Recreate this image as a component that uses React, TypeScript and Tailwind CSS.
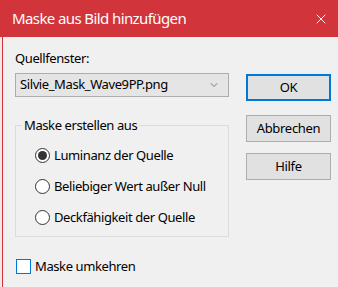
import { ChevronDown, X } from "lucide-react";

const font = { fontFamily: '"Noto Sans", "Open Sans", sans-serif' };

const Radio = ({ label, checked }: { label: string; checked?: boolean }) => (
  <div className="flex items-center h-[16px]">
    <span className="w-[15px] h-[15px] rounded-full border border-[#333] bg-white flex items-center justify-center">
      {checked && <span className="w-[9px] h-[9px] rounded-full bg-[#333]" />}
    </span>
    <span className="ml-[4px] text-[13px] tracking-[-0.4px] text-black leading-none">{label}</span>
  </div>
);

const Button = ({ label, primary }: { label: string; primary?: boolean }) => (
  <div
    className={`w-[85px] h-[27px] flex items-center justify-center bg-[#e1e1e1] text-[13px] tracking-[-0.3px] text-black ${
      primary ? "border-2 border-[#0078d7]" : "border border-[#adadad]"
    }`}
  >
    {label}
  </div>
);

export default function App() {
  return (
    <div className="w-[338px] h-[287px] flex flex-col overflow-hidden" style={font}>
      <div className="h-[37px] bg-[#d1343a] flex items-center justify-between pl-[12px] pr-[9px] shrink-0">
        <span className="text-white text-[15px] tracking-[-0.6px] leading-none pb-[1px]">Maske aus Bild hinzufügen</span>
        <X className="w-[16px] h-[16px] text-white" strokeWidth={1.4} />
      </div>

      <div className="flex-1 flex bg-[#f0f0f0]">
        <div className="w-[2px] bg-[#f0e8e8]" />
        <div className="w-[1px] bg-[#d1343a]" />

        <div className="flex-1 flex pl-[12px]">
          <div className="w-[214px] flex flex-col pt-[13px]">
            <div className="h-[16px] text-[13px] tracking-[-0.4px] text-black leading-[16px]">Quellfenster:</div>

            <div className="mt-[7px] h-[24px] bg-[#e5e5e5] border border-[#adadad] flex items-center justify-between pl-[4px] pr-[8px]">
              <span className="text-[13px] tracking-[-0.4px] text-black">Silvie_Mask_Wave9PP.png</span>
              <ChevronDown className="w-[12px] h-[12px] text-[#444]" strokeWidth={1.3} />
            </div>

            <fieldset className="mt-[20px] h-[120px] border border-[#dcdcdc] pl-[6px] pr-[8px] pt-[14px]">
              <legend className="px-[2px] text-[13px] tracking-[-0.4px] text-black leading-[16px]">Maske erstellen aus</legend>
              <div className="ml-[13px] flex flex-col gap-[15px]">
                <Radio label="Luminanz der Quelle" checked />
                <Radio label="Beliebiger Wert außer Null" />
                <Radio label="Deckfähigkeit der Quelle" />
              </div>
            </fieldset>

            <div className="mt-[22px] flex items-center">
              <span className="w-[15px] h-[15px] ml-[1px] border border-[#0078d7] bg-white" />
              <span className="ml-[4px] text-[13px] tracking-[-0.4px] text-black leading-none">Maske umkehren</span>
            </div>
          </div>

          <div className="ml-[17px] flex flex-col pt-[37px]">
            <Button label="OK" primary />
            <div className="mt-[14px]">
              <Button label="Abbrechen" />
            </div>
            <div className="mt-[11px]">
              <Button label="Hilfe" />
            </div>
          </div>
        </div>
      </div>
    </div>
  );
}
